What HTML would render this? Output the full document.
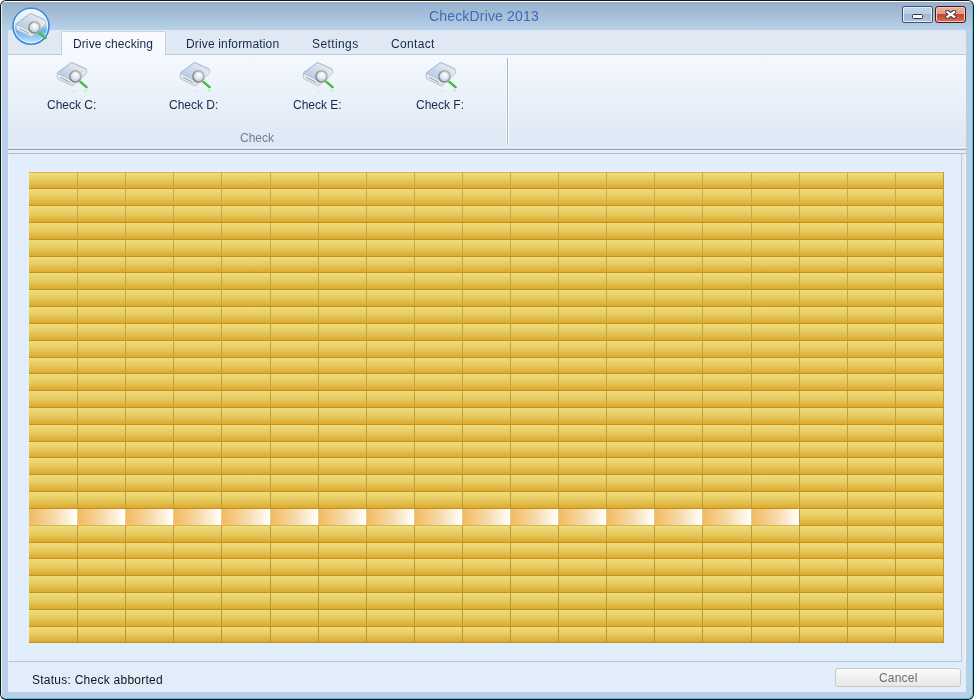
<!DOCTYPE html>
<html><head><meta charset="utf-8">
<style>
html,body{margin:0;padding:0;}
body{width:974px;height:700px;overflow:hidden;background:#ffffff;position:relative;font-family:"Liberation Sans",sans-serif;}
div,span,svg{position:absolute;box-sizing:border-box;}
.t{will-change:transform;}
#outer{left:0;top:0;width:974px;height:700px;background:#161616;border-radius:6px;}
#inner{left:1px;top:1px;width:972px;height:698px;border-radius:5px;background:#b9cfe8;border-left:1px solid #e6f3fb;border-top:1px solid #ffffff;border-right:1px solid #3fc6ee;border-bottom:1px solid #3fc6ee;}
#title{left:2px;top:2px;width:970px;height:28px;background:linear-gradient(#96b0cb,#afc8e1 75%,#b7d2ea);border-radius:4px 4px 0 0;}
#ttext{left:429px;top:8px;font-size:14px;color:#3f69b8;line-height:16px;letter-spacing:0.17px;white-space:nowrap;}
.tbtn{top:6px;width:31px;height:17px;border-radius:3px;}
#bmin{left:902px;border:1px solid #435167;border-radius:2px;background:linear-gradient(#c4d5ea 0,#b9cce3 50%,#a0b8d5 50%,#aec4de 100%);box-shadow:inset 0 0 0 1px #e6eef8;}
#bclose{left:935px;border:1px solid #4a1616;background:linear-gradient(#eab0a2 0,#e09a88 50%,#c6452c 50%,#d8705a 100%);box-shadow:inset 0 0 0 1px #f4c8bc;}
#client{left:8px;top:54px;width:958px;height:638px;background:#e1edfb;border-right:1px solid #f2f7fc;}
#tabstrip{left:8px;top:30px;width:958px;height:25px;background:linear-gradient(#e0e8f3 80%,#e4ecf5);border-bottom:1px solid #b7cae1;}
.tab{top:38px;font-size:12px;color:#15294a;line-height:12px;white-space:nowrap;}
#seltab{left:61px;top:31px;width:105px;height:24px;background:linear-gradient(#f8fafd,#f6f9fd);border:1px solid #c3d1e2;border-bottom:none;border-radius:2px 2px 0 0;}
#ribbon{left:8px;top:55px;width:958px;height:92px;background:linear-gradient(#f5f9fe,#e9f0f9 50%,#dde8f5);}
#rl1{left:8px;top:147px;width:958px;height:1px;background:#f1f5fa;}
#rl2{left:8px;top:148px;width:958px;height:2px;background:linear-gradient(#d2dbe5 50%,#9aabc0 50%);}
#rl3{left:8px;top:150px;width:958px;height:3px;background:#e3ebf2;}
#rl4{left:8px;top:153px;width:958px;height:1px;background:#b2bfcb;}
#sep{left:507px;top:58px;width:1px;height:87px;background:#a7b6ca;z-index:1;}
#sep2{left:506px;top:58px;width:3px;height:87px;background:linear-gradient(90deg,#f6f9fd,#f6f9fd 33%,transparent 33%,transparent 66%,#fbfdff 66%);}
.blabel{top:99px;font-size:12px;color:#15294a;line-height:12px;white-space:nowrap;letter-spacing:0px;}
#glabel{left:240px;top:132px;font-size:12px;color:#6d7d93;line-height:12px;}
#content{left:8px;top:154px;width:954px;height:508px;background:#e3eefc;border-left:1px solid #eef5fc;border-right:1px solid #c3ccd6;border-bottom:1px solid #b8c3ce;}
#status{left:8px;top:662px;width:958px;height:30px;background:#e1edfb;}
#stext{left:32px;top:674px;letter-spacing:0.25px;font-size:12px;color:#141414;line-height:12px;white-space:nowrap;}
#cancel{left:835px;top:668px;width:126px;height:19px;border:1px solid #c6c9cc;border-radius:3px;background:linear-gradient(#fbfbfb,#e7e7e7);}
#ctext{left:879px;top:672px;font-size:12px;color:#6a6a6a;line-height:12px;letter-spacing:0.2px;}
.row{left:29px;width:915px;background:linear-gradient(#eedd7c,#e6ca5e 50%,#dcaa2e);}
.rline{left:29px;width:915px;height:1px;background:#c3921e;}
#gtop{left:29px;top:172px;width:915px;height:1px;background:#d6b446;}
.cline{top:172px;width:1px;height:471px;background:linear-gradient(#c6aa50,#b8963a);}
#rborder{left:943px;top:172px;width:1px;height:471px;background:#c39a2a;}
.hcell{background:linear-gradient(90deg,#f2ba60,#f5d9a6 50%,#fcf0dc 80%,#fffdf8 96%);}
.hline{left:29px;width:770px;height:1px;background:#d9b456;}
.ico{}
#appicon{left:11px;top:7px;}
</style></head><body>
<div id="outer"></div>
<div id="inner"></div>
<div id="title"></div>
<div id="ttext" class="t">CheckDrive 2013</div>
<div id="bmin" class="tbtn"><div style="left:9px;top:7px;width:11px;height:5px;border:1px solid #2d3440;border-radius:1.5px;background:#fafcff;"></div></div>
<div id="bclose" class="tbtn"><svg style="left:9px;top:3px" width="12" height="9" viewBox="0 0 12 9"><path d="M2.4 2.0 L9.2 6.9 M9.2 2.0 L2.4 6.9" stroke="#2c2f3c" stroke-width="4.1" stroke-linecap="round"/><path d="M2.5 2.1 L9.1 6.8 M9.1 2.1 L2.5 6.8" stroke="#ffffff" stroke-width="2.3" stroke-linecap="square"/></svg></div>
<div id="client"></div>
<div id="tabstrip"></div>
<div id="ribbon"></div>
<div id="seltab"></div>
<div class="tab t" style="left:73px;letter-spacing:0.1px">Drive checking</div>
<div class="tab t" style="left:186px;letter-spacing:0.15px">Drive information</div>
<div class="tab t" style="left:312px;letter-spacing:0.4px">Settings</div>
<div class="tab t" style="left:391px;letter-spacing:0.35px">Contact</div>
<div id="sep"></div><div id="sep2"></div>
<svg class="i0" style="left:52px;top:58px" width="40" height="40" viewBox="0 0 40 40">
<defs>
<linearGradient id="gtopi0" x1="0.85" y1="0.1" x2="0.15" y2="0.8"><stop offset="0" stop-color="#e8eef6"/><stop offset="0.5" stop-color="#cfdbeb"/><stop offset="1" stop-color="#b6c8e2"/></linearGradient>
<linearGradient id="gfri0" x1="0" y1="0" x2="0" y2="1"><stop offset="0" stop-color="#f0f4f8"/><stop offset="1" stop-color="#dbe2ea"/></linearGradient>
<radialGradient id="glensi0" cx="0.55" cy="0.35" r="0.7"><stop offset="0" stop-color="#ffffff"/><stop offset="0.45" stop-color="#e2ebf6"/><stop offset="1" stop-color="#aac0de"/></radialGradient>
<linearGradient id="gringi0" x1="1" y1="0" x2="0" y2="1"><stop offset="0" stop-color="#bcbcbc"/><stop offset="1" stop-color="#767676"/></linearGradient>
<radialGradient id="grefi0"><stop offset="0" stop-color="#c4ccd6" stop-opacity="0.8"/><stop offset="1" stop-color="#e8eef6" stop-opacity="0"/></radialGradient>
<radialGradient id="ggri0"><stop offset="0" stop-color="#a8dca8" stop-opacity="0.9"/><stop offset="1" stop-color="#d8f0d8" stop-opacity="0"/></radialGradient>
</defs>
<ellipse cx="21.5" cy="33.2" rx="4.5" ry="1.4" fill="url(#grefi0)" opacity="0.7"/>
<ellipse cx="33.8" cy="32.6" rx="2.8" ry="1.7" transform="rotate(-35 33.8 32.6)" fill="url(#ggri0)"/>
<path d="M5.3 15.6 Q5.2 14.9 5.9 14.4 L18.6 5 Q19.6 4.2 20.8 4.8 L33.4 10.6 Q34.6 11.2 34.6 12.4 L34.6 14.2 Q34.6 15.1 33.9 15.7 L21.4 27.4 Q20.7 28.1 19.8 27.7 L6.1 21.1 Q5.3 20.7 5.3 19.9 Z" fill="url(#gfri0)" stroke="#a8b4c3" stroke-width="0.75"/>
<path d="M5.6 15.3 Q5.5 14.8 6.1 14.4 L18.7 5.2 Q19.6 4.6 20.6 5.1 L33.2 10.9 Q34.4 11.5 33.6 12.3 L21.3 22.7 Q20.5 23.4 19.6 23 L6.2 16.3 Q5.6 15.9 5.6 15.3 Z" fill="url(#gtopi0)" stroke="#9fb2c9" stroke-width="0.7"/>
<path d="M6.4 16.9 L19.8 23.7 L33.9 12.4" fill="none" stroke="#ffffff" stroke-width="0.8" opacity="0.95"/>
<path d="M8.2 19.3 L17.8 24.3" stroke="#8a98aa" stroke-width="0.9"/>
<line x1="27.6" y1="23.2" x2="34.6" y2="29.1" stroke="#2cb232" stroke-width="2.4" stroke-linecap="round"/>
<line x1="27.8" y1="22.9" x2="34.4" y2="28.5" stroke="#66d860" stroke-width="0.9" stroke-linecap="round"/>
<circle cx="23.4" cy="18.4" r="5.5" fill="url(#glensi0)" stroke="url(#gringi0)" stroke-width="1.8"/>
<circle cx="23.4" cy="18.4" r="6.6" fill="none" stroke="#d0d0d0" stroke-width="0.5"/>
<circle cx="23.4" cy="18.4" r="4.4" fill="none" stroke="#dcdcdc" stroke-width="0.5"/>
</svg><svg class="i1" style="left:175px;top:58px" width="40" height="40" viewBox="0 0 40 40">
<defs>
<linearGradient id="gtopi1" x1="0.85" y1="0.1" x2="0.15" y2="0.8"><stop offset="0" stop-color="#e8eef6"/><stop offset="0.5" stop-color="#cfdbeb"/><stop offset="1" stop-color="#b6c8e2"/></linearGradient>
<linearGradient id="gfri1" x1="0" y1="0" x2="0" y2="1"><stop offset="0" stop-color="#f0f4f8"/><stop offset="1" stop-color="#dbe2ea"/></linearGradient>
<radialGradient id="glensi1" cx="0.55" cy="0.35" r="0.7"><stop offset="0" stop-color="#ffffff"/><stop offset="0.45" stop-color="#e2ebf6"/><stop offset="1" stop-color="#aac0de"/></radialGradient>
<linearGradient id="gringi1" x1="1" y1="0" x2="0" y2="1"><stop offset="0" stop-color="#bcbcbc"/><stop offset="1" stop-color="#767676"/></linearGradient>
<radialGradient id="grefi1"><stop offset="0" stop-color="#c4ccd6" stop-opacity="0.8"/><stop offset="1" stop-color="#e8eef6" stop-opacity="0"/></radialGradient>
<radialGradient id="ggri1"><stop offset="0" stop-color="#a8dca8" stop-opacity="0.9"/><stop offset="1" stop-color="#d8f0d8" stop-opacity="0"/></radialGradient>
</defs>
<ellipse cx="21.5" cy="33.2" rx="4.5" ry="1.4" fill="url(#grefi1)" opacity="0.7"/>
<ellipse cx="33.8" cy="32.6" rx="2.8" ry="1.7" transform="rotate(-35 33.8 32.6)" fill="url(#ggri1)"/>
<path d="M5.3 15.6 Q5.2 14.9 5.9 14.4 L18.6 5 Q19.6 4.2 20.8 4.8 L33.4 10.6 Q34.6 11.2 34.6 12.4 L34.6 14.2 Q34.6 15.1 33.9 15.7 L21.4 27.4 Q20.7 28.1 19.8 27.7 L6.1 21.1 Q5.3 20.7 5.3 19.9 Z" fill="url(#gfri1)" stroke="#a8b4c3" stroke-width="0.75"/>
<path d="M5.6 15.3 Q5.5 14.8 6.1 14.4 L18.7 5.2 Q19.6 4.6 20.6 5.1 L33.2 10.9 Q34.4 11.5 33.6 12.3 L21.3 22.7 Q20.5 23.4 19.6 23 L6.2 16.3 Q5.6 15.9 5.6 15.3 Z" fill="url(#gtopi1)" stroke="#9fb2c9" stroke-width="0.7"/>
<path d="M6.4 16.9 L19.8 23.7 L33.9 12.4" fill="none" stroke="#ffffff" stroke-width="0.8" opacity="0.95"/>
<path d="M8.2 19.3 L17.8 24.3" stroke="#8a98aa" stroke-width="0.9"/>
<line x1="27.6" y1="23.2" x2="34.6" y2="29.1" stroke="#2cb232" stroke-width="2.4" stroke-linecap="round"/>
<line x1="27.8" y1="22.9" x2="34.4" y2="28.5" stroke="#66d860" stroke-width="0.9" stroke-linecap="round"/>
<circle cx="23.4" cy="18.4" r="5.5" fill="url(#glensi1)" stroke="url(#gringi1)" stroke-width="1.8"/>
<circle cx="23.4" cy="18.4" r="6.6" fill="none" stroke="#d0d0d0" stroke-width="0.5"/>
<circle cx="23.4" cy="18.4" r="4.4" fill="none" stroke="#dcdcdc" stroke-width="0.5"/>
</svg><svg class="i2" style="left:298px;top:58px" width="40" height="40" viewBox="0 0 40 40">
<defs>
<linearGradient id="gtopi2" x1="0.85" y1="0.1" x2="0.15" y2="0.8"><stop offset="0" stop-color="#e8eef6"/><stop offset="0.5" stop-color="#cfdbeb"/><stop offset="1" stop-color="#b6c8e2"/></linearGradient>
<linearGradient id="gfri2" x1="0" y1="0" x2="0" y2="1"><stop offset="0" stop-color="#f0f4f8"/><stop offset="1" stop-color="#dbe2ea"/></linearGradient>
<radialGradient id="glensi2" cx="0.55" cy="0.35" r="0.7"><stop offset="0" stop-color="#ffffff"/><stop offset="0.45" stop-color="#e2ebf6"/><stop offset="1" stop-color="#aac0de"/></radialGradient>
<linearGradient id="gringi2" x1="1" y1="0" x2="0" y2="1"><stop offset="0" stop-color="#bcbcbc"/><stop offset="1" stop-color="#767676"/></linearGradient>
<radialGradient id="grefi2"><stop offset="0" stop-color="#c4ccd6" stop-opacity="0.8"/><stop offset="1" stop-color="#e8eef6" stop-opacity="0"/></radialGradient>
<radialGradient id="ggri2"><stop offset="0" stop-color="#a8dca8" stop-opacity="0.9"/><stop offset="1" stop-color="#d8f0d8" stop-opacity="0"/></radialGradient>
</defs>
<ellipse cx="21.5" cy="33.2" rx="4.5" ry="1.4" fill="url(#grefi2)" opacity="0.7"/>
<ellipse cx="33.8" cy="32.6" rx="2.8" ry="1.7" transform="rotate(-35 33.8 32.6)" fill="url(#ggri2)"/>
<path d="M5.3 15.6 Q5.2 14.9 5.9 14.4 L18.6 5 Q19.6 4.2 20.8 4.8 L33.4 10.6 Q34.6 11.2 34.6 12.4 L34.6 14.2 Q34.6 15.1 33.9 15.7 L21.4 27.4 Q20.7 28.1 19.8 27.7 L6.1 21.1 Q5.3 20.7 5.3 19.9 Z" fill="url(#gfri2)" stroke="#a8b4c3" stroke-width="0.75"/>
<path d="M5.6 15.3 Q5.5 14.8 6.1 14.4 L18.7 5.2 Q19.6 4.6 20.6 5.1 L33.2 10.9 Q34.4 11.5 33.6 12.3 L21.3 22.7 Q20.5 23.4 19.6 23 L6.2 16.3 Q5.6 15.9 5.6 15.3 Z" fill="url(#gtopi2)" stroke="#9fb2c9" stroke-width="0.7"/>
<path d="M6.4 16.9 L19.8 23.7 L33.9 12.4" fill="none" stroke="#ffffff" stroke-width="0.8" opacity="0.95"/>
<path d="M8.2 19.3 L17.8 24.3" stroke="#8a98aa" stroke-width="0.9"/>
<line x1="27.6" y1="23.2" x2="34.6" y2="29.1" stroke="#2cb232" stroke-width="2.4" stroke-linecap="round"/>
<line x1="27.8" y1="22.9" x2="34.4" y2="28.5" stroke="#66d860" stroke-width="0.9" stroke-linecap="round"/>
<circle cx="23.4" cy="18.4" r="5.5" fill="url(#glensi2)" stroke="url(#gringi2)" stroke-width="1.8"/>
<circle cx="23.4" cy="18.4" r="6.6" fill="none" stroke="#d0d0d0" stroke-width="0.5"/>
<circle cx="23.4" cy="18.4" r="4.4" fill="none" stroke="#dcdcdc" stroke-width="0.5"/>
</svg><svg class="i3" style="left:421px;top:58px" width="40" height="40" viewBox="0 0 40 40">
<defs>
<linearGradient id="gtopi3" x1="0.85" y1="0.1" x2="0.15" y2="0.8"><stop offset="0" stop-color="#e8eef6"/><stop offset="0.5" stop-color="#cfdbeb"/><stop offset="1" stop-color="#b6c8e2"/></linearGradient>
<linearGradient id="gfri3" x1="0" y1="0" x2="0" y2="1"><stop offset="0" stop-color="#f0f4f8"/><stop offset="1" stop-color="#dbe2ea"/></linearGradient>
<radialGradient id="glensi3" cx="0.55" cy="0.35" r="0.7"><stop offset="0" stop-color="#ffffff"/><stop offset="0.45" stop-color="#e2ebf6"/><stop offset="1" stop-color="#aac0de"/></radialGradient>
<linearGradient id="gringi3" x1="1" y1="0" x2="0" y2="1"><stop offset="0" stop-color="#bcbcbc"/><stop offset="1" stop-color="#767676"/></linearGradient>
<radialGradient id="grefi3"><stop offset="0" stop-color="#c4ccd6" stop-opacity="0.8"/><stop offset="1" stop-color="#e8eef6" stop-opacity="0"/></radialGradient>
<radialGradient id="ggri3"><stop offset="0" stop-color="#a8dca8" stop-opacity="0.9"/><stop offset="1" stop-color="#d8f0d8" stop-opacity="0"/></radialGradient>
</defs>
<ellipse cx="21.5" cy="33.2" rx="4.5" ry="1.4" fill="url(#grefi3)" opacity="0.7"/>
<ellipse cx="33.8" cy="32.6" rx="2.8" ry="1.7" transform="rotate(-35 33.8 32.6)" fill="url(#ggri3)"/>
<path d="M5.3 15.6 Q5.2 14.9 5.9 14.4 L18.6 5 Q19.6 4.2 20.8 4.8 L33.4 10.6 Q34.6 11.2 34.6 12.4 L34.6 14.2 Q34.6 15.1 33.9 15.7 L21.4 27.4 Q20.7 28.1 19.8 27.7 L6.1 21.1 Q5.3 20.7 5.3 19.9 Z" fill="url(#gfri3)" stroke="#a8b4c3" stroke-width="0.75"/>
<path d="M5.6 15.3 Q5.5 14.8 6.1 14.4 L18.7 5.2 Q19.6 4.6 20.6 5.1 L33.2 10.9 Q34.4 11.5 33.6 12.3 L21.3 22.7 Q20.5 23.4 19.6 23 L6.2 16.3 Q5.6 15.9 5.6 15.3 Z" fill="url(#gtopi3)" stroke="#9fb2c9" stroke-width="0.7"/>
<path d="M6.4 16.9 L19.8 23.7 L33.9 12.4" fill="none" stroke="#ffffff" stroke-width="0.8" opacity="0.95"/>
<path d="M8.2 19.3 L17.8 24.3" stroke="#8a98aa" stroke-width="0.9"/>
<line x1="27.6" y1="23.2" x2="34.6" y2="29.1" stroke="#2cb232" stroke-width="2.4" stroke-linecap="round"/>
<line x1="27.8" y1="22.9" x2="34.4" y2="28.5" stroke="#66d860" stroke-width="0.9" stroke-linecap="round"/>
<circle cx="23.4" cy="18.4" r="5.5" fill="url(#glensi3)" stroke="url(#gringi3)" stroke-width="1.8"/>
<circle cx="23.4" cy="18.4" r="6.6" fill="none" stroke="#d0d0d0" stroke-width="0.5"/>
<circle cx="23.4" cy="18.4" r="4.4" fill="none" stroke="#dcdcdc" stroke-width="0.5"/>
</svg>
<div class="blabel t" style="left:47px">Check C:</div>
<div class="blabel t" style="left:169px">Check D:</div>
<div class="blabel t" style="left:293px">Check E:</div>
<div class="blabel t" style="left:416px">Check F:</div>
<div id="glabel" class="t">Check</div>
<div id="rl1"></div><div id="rl2"></div><div id="rl3"></div><div id="rl4"></div>
<div id="content"></div>
<div id="gtop"></div>
<div class="row" style="top:173px;height:15px"></div>
<div class="row" style="top:189px;height:16px"></div>
<div class="row" style="top:206px;height:16px"></div>
<div class="row" style="top:223px;height:16px"></div>
<div class="row" style="top:240px;height:16px"></div>
<div class="row" style="top:257px;height:15px"></div>
<div class="row" style="top:273px;height:16px"></div>
<div class="row" style="top:290px;height:16px"></div>
<div class="row" style="top:307px;height:16px"></div>
<div class="row" style="top:324px;height:16px"></div>
<div class="row" style="top:341px;height:16px"></div>
<div class="row" style="top:358px;height:15px"></div>
<div class="row" style="top:374px;height:16px"></div>
<div class="row" style="top:391px;height:16px"></div>
<div class="row" style="top:408px;height:16px"></div>
<div class="row" style="top:425px;height:16px"></div>
<div class="row" style="top:442px;height:15px"></div>
<div class="row" style="top:458px;height:16px"></div>
<div class="row" style="top:475px;height:16px"></div>
<div class="row" style="top:492px;height:16px"></div>
<div class="row" style="top:509px;height:16px"></div>
<div class="row" style="top:526px;height:16px"></div>
<div class="row" style="top:543px;height:15px"></div>
<div class="row" style="top:559px;height:16px"></div>
<div class="row" style="top:576px;height:16px"></div>
<div class="row" style="top:593px;height:16px"></div>
<div class="row" style="top:610px;height:16px"></div>
<div class="row" style="top:627px;height:15px"></div>
<div class="cline" style="left:77px"></div>
<div class="cline" style="left:125px"></div>
<div class="cline" style="left:173px"></div>
<div class="cline" style="left:221px"></div>
<div class="cline" style="left:270px"></div>
<div class="cline" style="left:318px"></div>
<div class="cline" style="left:366px"></div>
<div class="cline" style="left:414px"></div>
<div class="cline" style="left:462px"></div>
<div class="cline" style="left:510px"></div>
<div class="cline" style="left:558px"></div>
<div class="cline" style="left:606px"></div>
<div class="cline" style="left:654px"></div>
<div class="cline" style="left:702px"></div>
<div class="cline" style="left:751px"></div>
<div class="cline" style="left:799px"></div>
<div class="cline" style="left:847px"></div>
<div class="cline" style="left:895px"></div>
<div class="hcell" style="left:29px;top:509px;width:48px;height:16px"></div>
<div style="left:77px;top:509px;width:1px;height:16px;background:#e6cc92"></div>
<div class="hcell" style="left:78px;top:509px;width:47px;height:16px"></div>
<div style="left:125px;top:509px;width:1px;height:16px;background:#e6cc92"></div>
<div class="hcell" style="left:126px;top:509px;width:47px;height:16px"></div>
<div style="left:173px;top:509px;width:1px;height:16px;background:#e6cc92"></div>
<div class="hcell" style="left:174px;top:509px;width:47px;height:16px"></div>
<div style="left:221px;top:509px;width:1px;height:16px;background:#e6cc92"></div>
<div class="hcell" style="left:222px;top:509px;width:48px;height:16px"></div>
<div style="left:270px;top:509px;width:1px;height:16px;background:#e6cc92"></div>
<div class="hcell" style="left:271px;top:509px;width:47px;height:16px"></div>
<div style="left:318px;top:509px;width:1px;height:16px;background:#e6cc92"></div>
<div class="hcell" style="left:319px;top:509px;width:47px;height:16px"></div>
<div style="left:366px;top:509px;width:1px;height:16px;background:#e6cc92"></div>
<div class="hcell" style="left:367px;top:509px;width:47px;height:16px"></div>
<div style="left:414px;top:509px;width:1px;height:16px;background:#e6cc92"></div>
<div class="hcell" style="left:415px;top:509px;width:47px;height:16px"></div>
<div style="left:462px;top:509px;width:1px;height:16px;background:#e6cc92"></div>
<div class="hcell" style="left:463px;top:509px;width:47px;height:16px"></div>
<div style="left:510px;top:509px;width:1px;height:16px;background:#e6cc92"></div>
<div class="hcell" style="left:511px;top:509px;width:47px;height:16px"></div>
<div style="left:558px;top:509px;width:1px;height:16px;background:#e6cc92"></div>
<div class="hcell" style="left:559px;top:509px;width:47px;height:16px"></div>
<div style="left:606px;top:509px;width:1px;height:16px;background:#e6cc92"></div>
<div class="hcell" style="left:607px;top:509px;width:47px;height:16px"></div>
<div style="left:654px;top:509px;width:1px;height:16px;background:#e6cc92"></div>
<div class="hcell" style="left:655px;top:509px;width:47px;height:16px"></div>
<div style="left:702px;top:509px;width:1px;height:16px;background:#e6cc92"></div>
<div class="hcell" style="left:703px;top:509px;width:48px;height:16px"></div>
<div style="left:751px;top:509px;width:1px;height:16px;background:#e6cc92"></div>
<div class="hcell" style="left:752px;top:509px;width:47px;height:16px"></div>
<div class="rline" style="top:188px"></div>
<div class="rline" style="top:205px"></div>
<div class="rline" style="top:222px"></div>
<div class="rline" style="top:239px"></div>
<div class="rline" style="top:256px"></div>
<div class="rline" style="top:272px"></div>
<div class="rline" style="top:289px"></div>
<div class="rline" style="top:306px"></div>
<div class="rline" style="top:323px"></div>
<div class="rline" style="top:340px"></div>
<div class="rline" style="top:357px"></div>
<div class="rline" style="top:373px"></div>
<div class="rline" style="top:390px"></div>
<div class="rline" style="top:407px"></div>
<div class="rline" style="top:424px"></div>
<div class="rline" style="top:441px"></div>
<div class="rline" style="top:457px"></div>
<div class="rline" style="top:474px"></div>
<div class="rline" style="top:491px"></div>
<div class="rline" style="top:508px"></div>
<div class="hline" style="top:525px"></div>
<div class="rline" style="top:525px;left:799px;width:145px"></div>
<div class="rline" style="top:542px"></div>
<div class="rline" style="top:558px"></div>
<div class="rline" style="top:575px"></div>
<div class="rline" style="top:592px"></div>
<div class="rline" style="top:609px"></div>
<div class="rline" style="top:626px"></div>
<div class="rline" style="top:642px"></div>
<div id="rborder"></div>
<div id="status"></div>
<div id="stext" class="t">Status: Check abborted</div>
<div id="cancel"></div>
<div id="ctext" class="t">Cancel</div>
<svg id="appicon" width="40" height="40" viewBox="0 0 40 40">
<defs>
<linearGradient id="gapp" x1="0" y1="0" x2="0" y2="1"><stop offset="0" stop-color="#f4f9fd"/><stop offset="0.4" stop-color="#dcebf7"/><stop offset="0.62" stop-color="#62b0ea"/><stop offset="1" stop-color="#c4ecff"/></linearGradient>
</defs>
<circle cx="20" cy="19.2" r="18" fill="url(#gapp)" stroke="#3d89d8" stroke-width="1.6"/>
<circle cx="20" cy="19.2" r="16.6" fill="none" stroke="#e8f6ff" stroke-width="0.9"/>
</svg>
<svg class="iapp" style="left:11px;top:9px" width="40" height="40" viewBox="0 0 40 40">
<defs>
<linearGradient id="gtopiapp" x1="0.85" y1="0.1" x2="0.15" y2="0.8"><stop offset="0" stop-color="#e8eef6"/><stop offset="0.5" stop-color="#cfdbeb"/><stop offset="1" stop-color="#b6c8e2"/></linearGradient>
<linearGradient id="gfriapp" x1="0" y1="0" x2="0" y2="1"><stop offset="0" stop-color="#f0f4f8"/><stop offset="1" stop-color="#dbe2ea"/></linearGradient>
<radialGradient id="glensiapp" cx="0.55" cy="0.35" r="0.7"><stop offset="0" stop-color="#ffffff"/><stop offset="0.45" stop-color="#e2ebf6"/><stop offset="1" stop-color="#aac0de"/></radialGradient>
<linearGradient id="gringiapp" x1="1" y1="0" x2="0" y2="1"><stop offset="0" stop-color="#bcbcbc"/><stop offset="1" stop-color="#767676"/></linearGradient>
<radialGradient id="grefiapp"><stop offset="0" stop-color="#c4ccd6" stop-opacity="0.8"/><stop offset="1" stop-color="#e8eef6" stop-opacity="0"/></radialGradient>
<radialGradient id="ggriapp"><stop offset="0" stop-color="#a8dca8" stop-opacity="0.9"/><stop offset="1" stop-color="#d8f0d8" stop-opacity="0"/></radialGradient>
</defs>

<path d="M5.3 15.6 Q5.2 14.9 5.9 14.4 L18.6 5 Q19.6 4.2 20.8 4.8 L33.4 10.6 Q34.6 11.2 34.6 12.4 L34.6 14.2 Q34.6 15.1 33.9 15.7 L21.4 27.4 Q20.7 28.1 19.8 27.7 L6.1 21.1 Q5.3 20.7 5.3 19.9 Z" fill="url(#gfriapp)" stroke="#a8b4c3" stroke-width="0.75"/>
<path d="M5.6 15.3 Q5.5 14.8 6.1 14.4 L18.7 5.2 Q19.6 4.6 20.6 5.1 L33.2 10.9 Q34.4 11.5 33.6 12.3 L21.3 22.7 Q20.5 23.4 19.6 23 L6.2 16.3 Q5.6 15.9 5.6 15.3 Z" fill="url(#gtopiapp)" stroke="#9fb2c9" stroke-width="0.7"/>
<path d="M6.4 16.9 L19.8 23.7 L33.9 12.4" fill="none" stroke="#ffffff" stroke-width="0.8" opacity="0.95"/>
<path d="M8.2 19.3 L17.8 24.3" stroke="#8a98aa" stroke-width="0.9"/>
<line x1="27.6" y1="23.2" x2="34.6" y2="29.1" stroke="#2cb232" stroke-width="2.4" stroke-linecap="round"/>
<line x1="27.8" y1="22.9" x2="34.4" y2="28.5" stroke="#66d860" stroke-width="0.9" stroke-linecap="round"/>
<circle cx="23.4" cy="18.4" r="5.5" fill="url(#glensiapp)" stroke="url(#gringiapp)" stroke-width="1.8"/>
<circle cx="23.4" cy="18.4" r="6.6" fill="none" stroke="#d0d0d0" stroke-width="0.5"/>
<circle cx="23.4" cy="18.4" r="4.4" fill="none" stroke="#dcdcdc" stroke-width="0.5"/>
</svg>
</body></html>
